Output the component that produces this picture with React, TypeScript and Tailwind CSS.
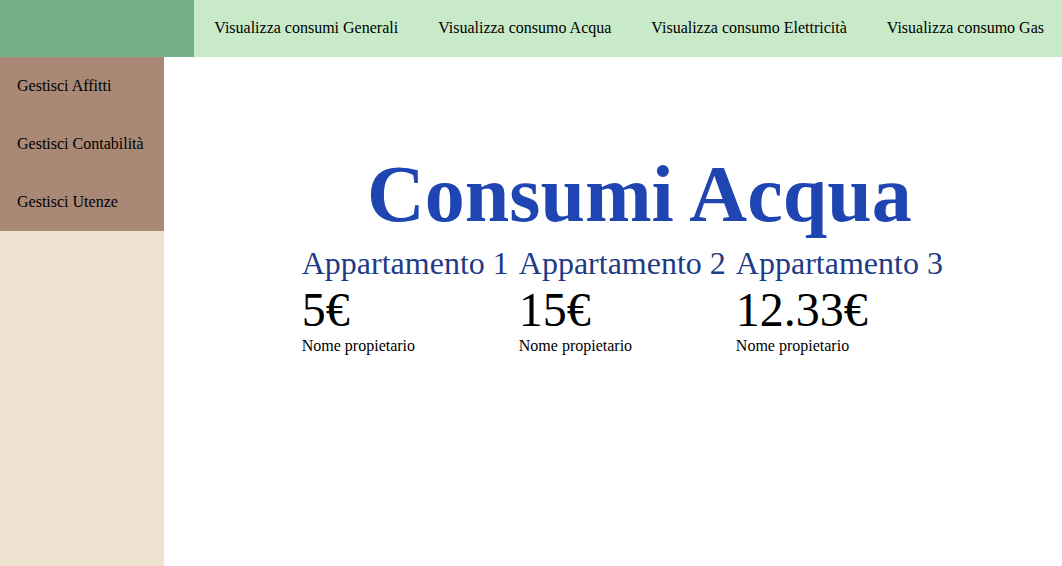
const usageLinks = [
  'Visualizza consumi Generali',
  'Visualizza consumo Acqua',
  'Visualizza consumo Elettricità',
  'Visualizza consumo Gas',
];

const manageLinks = ['Gestisci Affitti', 'Gestisci Contabilità', 'Gestisci Utenze'];

const apartments = [
  { name: 'Appartamento 1', cost: '5€', owner: 'Nome propietario' },
  { name: 'Appartamento 2', cost: '15€', owner: 'Nome propietario' },
  { name: 'Appartamento 3', cost: '12.33€', owner: 'Nome propietario' },
];

export default function App() {
  return (
    <div className="flex min-h-screen flex-col bg-white font-['Liberation_Serif',serif] text-base text-black">
      <header className="flex bg-[#73af87]">
        <nav aria-label="Consumi" className="ml-auto flex bg-[#c8eac8]">
          {usageLinks.map((label) => (
            <a key={label} href="#" className="px-5 pt-4 pb-[17px] leading-6 whitespace-nowrap last:pr-[18px]">
              {label}
            </a>
          ))}
        </nav>
      </header>
      <div className="flex grow">
        <aside className="shrink-0 bg-[#eee1d0]">
          <nav aria-label="Gestione" className="flex flex-col bg-[#a98875]">
            {manageLinks.map((label) => (
              <a key={label} href="#" className="py-4 pr-5 pl-[17px] leading-[26px] whitespace-nowrap">
                {label}
              </a>
            ))}
          </nav>
        </aside>
        <main className="flex grow flex-col items-center pt-[92px] pl-[53px]">
          <h1 className="mb-0.5 text-[80px] leading-[90px] font-bold text-[#1e45b1]">Consumi Acqua</h1>
          <div className="flex gap-[10px] pr-[34px]">
            {apartments.map((apartment) => (
              <section key={apartment.name}>
                <h2 className="text-[32px] leading-[44px] text-[#1f3b86]">{apartment.name}</h2>
                <p className="text-5xl leading-[50px]">{apartment.cost}</p>
                <p className="leading-[22px]">{apartment.owner}</p>
              </section>
            ))}
          </div>
        </main>
      </div>
    </div>
  );
}
